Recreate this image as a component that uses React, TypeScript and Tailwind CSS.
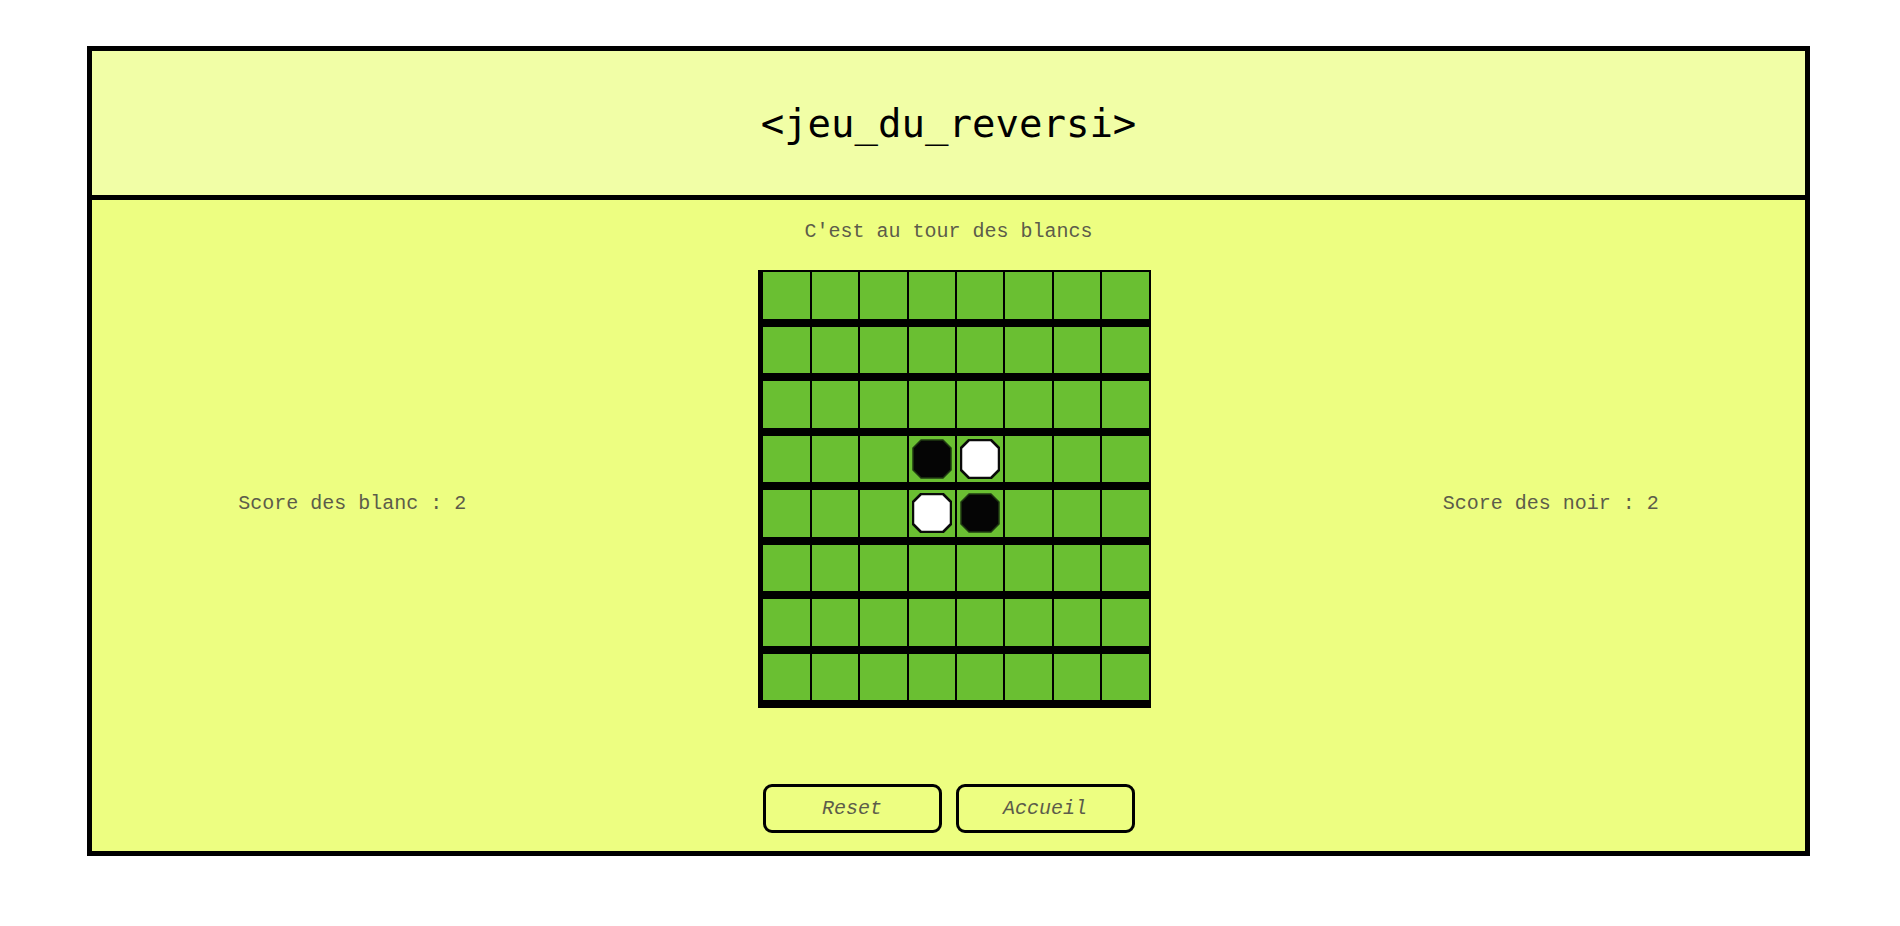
import React from 'react'

type Cell = 0 | 1 | 2 // 0 vide, 1 blanc, 2 noir

const initialBoard = (): Cell[][] => {
  const b: Cell[][] = Array.from({ length: 8 }, () => Array(8).fill(0) as Cell[])
  b[3][3] = 2
  b[3][4] = 1
  b[4][3] = 1
  b[4][4] = 2
  return b
}

function Piece({ color }: { color: 'white' | 'black' }) {
  const pts = '9,1 31,1 39,9 39,31 31,39 9,39 1,31 1,9'
  return (
    <svg width="40" height="40" viewBox="0 0 40 40" className="block">
      {color === 'black' ? (
        <polygon points={pts} fill="#050505" stroke="#1f3a12" strokeWidth="1.5" strokeLinejoin="round" />
      ) : (
        <polygon points={pts} fill="#ffffff" stroke="#0a0a0a" strokeWidth="2.5" strokeLinejoin="round" />
      )}
    </svg>
  )
}

export default function App() {
  const board = initialBoard()
  const mono = { fontFamily: '"Liberation Mono", monospace' }

  return (
    <div className="min-h-[926px] bg-white pt-[46px]">
      <div className="ml-[87px] w-[1723px] border-[5px] border-black">
        {/* Header */}
        <div className="h-[149px] bg-[#f1fea6] border-b-[5px] border-black flex items-center justify-center">
          <h1
            className="text-[39px] text-black leading-none"
            style={{ fontFamily: '"DejaVu Sans Mono", monospace' }}
          >
            &lt;jeu_du_reversi&gt;
          </h1>
        </div>

        {/* Corps */}
        <div className="h-[651px] bg-[#edfe81] flex flex-col pt-[20px]" style={mono}>
          <p className="text-center text-[20px] leading-[24px] text-[#5c5c4a]">C'est au tour des blancs</p>

          <div className="flex justify-around items-center mt-[26px]">
            <p className="text-[20px] leading-[24px] text-[#5c5c4a] whitespace-pre">Score des blanc : 2</p>

            <div className="mb-[30px] border-t border-l-4 border-r border-b border-black">
              {board.map((row, i) => (
                <div key={i} className="flex border-b-[6px] border-black">
                  {row.map((c, j) => (
                    <div
                      key={j}
                      className="w-[46.4px] h-[46.5px] box-content border border-black bg-[#6abf32] flex items-center justify-center"
                    >
                      {c === 1 && <Piece color="white" />}
                      {c === 2 && <Piece color="black" />}
                    </div>
                  ))}
                </div>
              ))}
            </div>

            <p className="text-[20px] leading-[24px] text-[#5c5c4a] whitespace-pre">Score des noir : 2</p>
          </div>

          <div className="flex justify-center gap-[14px] mt-[46px]">
            <button className="w-[179px] h-[49px] border-[3px] border-black rounded-[9px] italic text-[20px] text-[#5c5c4a]">
              Reset
            </button>
            <button className="w-[179px] h-[49px] border-[3px] border-black rounded-[9px] italic text-[20px] text-[#5c5c4a]">
              Accueil
            </button>
          </div>
        </div>
      </div>
    </div>
  )
}
